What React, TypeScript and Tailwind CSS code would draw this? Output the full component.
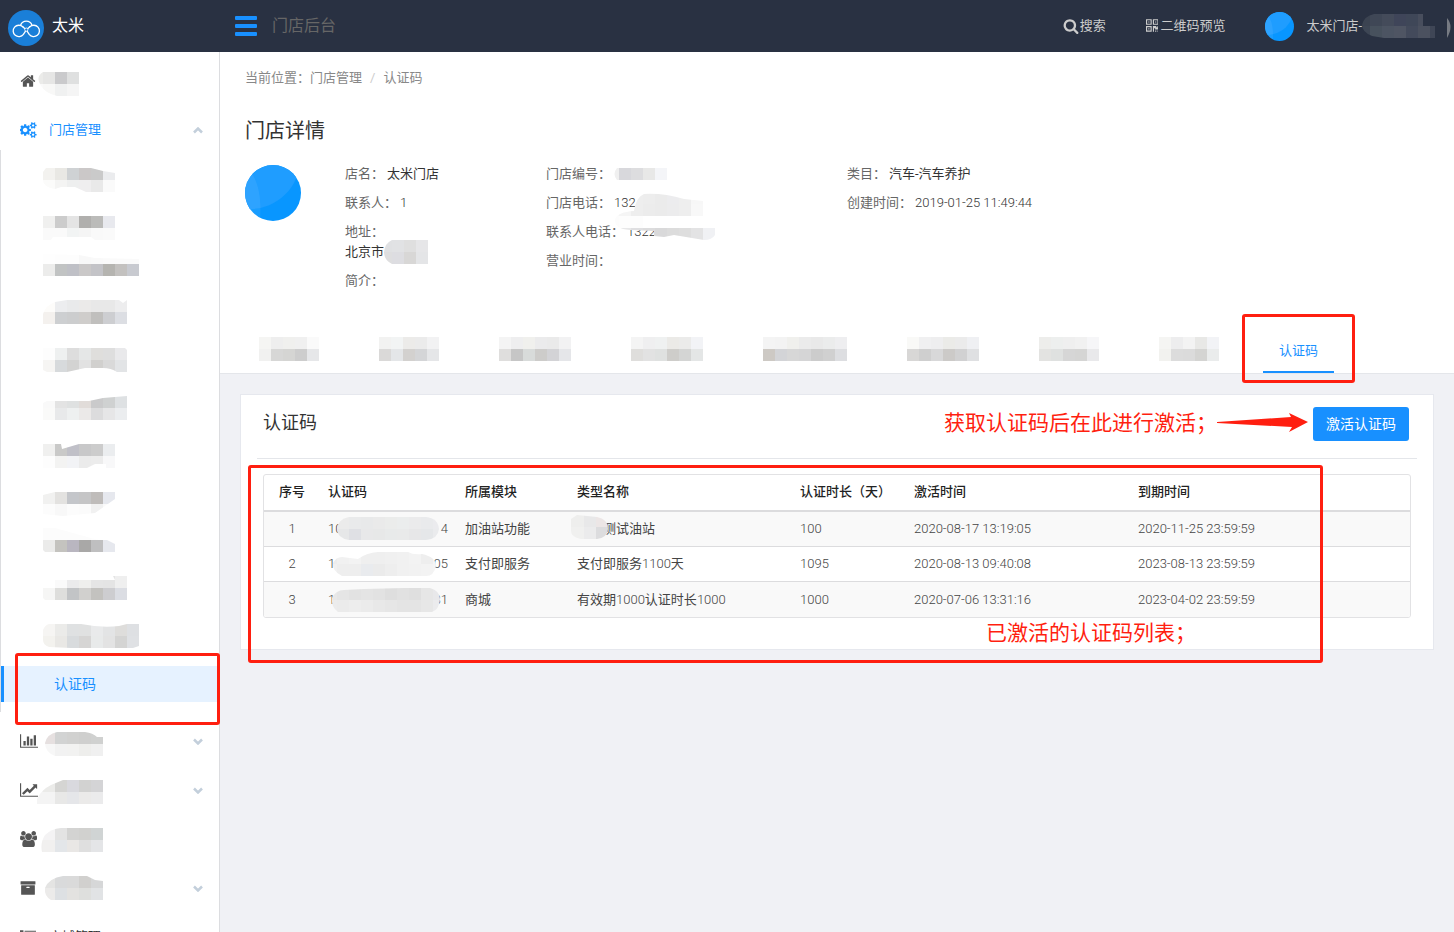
import { useId } from 'react';
import type { ReactNode } from 'react';

const CELL = 12;

type MosaicProps = {
  width: number;
  height: number;
  x?: number;
  y?: number;
  rows: string[];
  clip?: string;
  className?: string;
};

// Pixelated cover for private text. Each row is a list of hex colours, one per cell.
function Mosaic({ width, height, x = 0, y = 0, rows, clip, className }: MosaicProps) {
  const id = useId();
  return (
    <svg
      width={width}
      height={height}
      viewBox={`0 0 ${width} ${height}`}
      shapeRendering="crispEdges"
      aria-hidden="true"
      className={`shrink-0 ${className ?? ''}`}
    >
      {clip && (
        <clipPath id={id}>
          <path d={clip} />
        </clipPath>
      )}
      <g clipPath={clip ? `url(#${id})` : undefined}>
        {rows.map((row, r) =>
          row
            .split(' ')
            .map((color, c) => (
              <rect
                key={`${r}-${c}`}
                x={x + c * CELL}
                y={y + r * CELL}
                width={CELL}
                height={CELL}
                fill={`#${color}`}
              />
            )),
        )}
      </g>
    </svg>
  );
}

const icons = {
  home: {
    w: 1792,
    d: 'M1472 992v480q0 26-19 45t-45 19h-384v-384h-256v384h-384q-26 0-45-19t-19-45v-480q0-1 .5-3t.5-3l575-474 575 474q1 2 1 6zm223-69l-62 74q-8 9-21 11h-3q-13 0-21-7l-692-577-692 577q-12 8-24 7-13-2-21-11l-62-74q-8-10-7-23.5t11-21.5l719-599q32-26 76-26t76 26l244 204v-195q0-14 9-23t23-9h192q14 0 23 9t9 23v408l219 182q10 8 11 21.5t-7 23.5z',
  },
  search: {
    w: 1792,
    d: 'M1216 832q0-185-131.5-316.5t-316.5-131.5-316.5 131.5-131.5 316.5 131.5 316.5 316.5 131.5 316.5-131.5 131.5-316.5zm512 832q0 52-38 90t-90 38q-54 0-90-38l-343-342q-179 124-399 124-143 0-273.5-55.5t-225-150-150-225-55.5-273.5 55.5-273.5 150-225 225-150 273.5-55.5 273.5 55.5 225 150 150 225 55.5 273.5q0 220-124 399l343 343q37 37 37 90z',
  },
  cogs: {
    w: 1920,
    d: 'M832 896q0-106-75-181t-181-75-181 75-75 181 75 181 181 75 181-75 75-181zm768 512q0-52-38-90t-90-38-90 38-38 90q0 53 37.5 90.5t90.5 37.5 90.5-37.5 37.5-90.5zm0-1024q0-52-38-90t-90-38-90 38-38 90q0 53 37.5 90.5t90.5 37.5 90.5-37.5 37.5-90.5zm-384 421v185q0 10-7 19.5t-16 10.5l-155 24q-11 35-32 76 34 48 90 115 7 11 7 20 0 12-7 19-23 30-82.5 89.5t-78.5 59.5q-11 0-21-7l-115-90q-37 19-77 31-11 108-23 155-7 24-30 24h-186q-11 0-20-7.5t-10-17.5l-23-153q-34-10-75-31l-118 89q-7 7-20 7-11 0-21-8-144-133-144-160 0-9 7-19 10-14 41-53t47-61q-23-44-35-82l-152-24q-10-1-17-9.5t-7-19.5v-185q0-10 7-19.5t16-10.5l155-24q11-35 32-76-34-48-90-115-7-11-7-20 0-12 7-20 22-30 82-89t79-59q11 0 21 7l115 90q34-18 77-32 11-108 23-154 7-24 30-24h186q11 0 20 7.5t10 17.5l23 153q34 10 75 31l118-89q8-7 20-7 11 0 21 8 144 133 144 160 0 8-7 19-12 16-42 54t-45 60q23 48 34 82l152 23q10 2 17 10.5t7 19.5zm640 533v140q0 16-149 31-12 27-30 52 51 113 51 138 0 4-4 7-122 71-124 71-8 0-46-47t-52-68q-20 2-30 2t-30-2q-14 21-52 68t-46 47q-2 0-124-71-4-3-4-7 0-25 51-138-18-25-30-52-149-15-149-31v-140q0-16 149-31 13-29 30-52-51-113-51-138 0-4 4-7 4-2 35-20t59-34 30-16q8 0 46 46.5t52 67.5q20-2 30-2t30 2q51-71 92-112l6-2q4 0 124 70 4 3 4 7 0 25-51 138 17 23 30 52 149 15 149 31zm0-1024v140q0 16-149 31-12 27-30 52 51 113 51 138 0 4-4 7-122 71-124 71-8 0-46-47t-52-68q-20 2-30 2t-30-2q-14 21-52 68t-46 47q-2 0-124-71-4-3-4-7 0-25 51-138-18-25-30-52-149-15-149-31v-140q0-16 149-31 13-29 30-52-51-113-51-138 0-4 4-7 4-2 35-20t59-34 30-16q8 0 46 46.5t52 67.5q20-2 30-2t30 2q51-71 92-112l6-2q4 0 124 70 4 3 4 7 0 25-51 138 17 23 30 52 149 15 149 31z',
  },
  barChart: {
    w: 2048,
    d: 'M640 896v512h-256v-512h256zm384-512v1024h-256v-1024h256zm1024 1152v128h-2048v-1536h128v1408h1920zm-640-896v768h-256v-768h256zm384-384v1152h-256v-1152h256z',
  },
  lineChart: {
    w: 2048,
    d: 'M2048 1536v128h-2048v-1536h128v1408h1920zm-128-1248v435q0 21-19.5 29.5t-35.5-7.5l-121-121-633 633q-10 10-23 10t-23-10l-233-233-416 416-192-192 585-585q10-10 23-10t23 10l233 233 464-464-121-121q-16-16-7.5-35.5t29.5-19.5h435q14 0 23 9t9 23z',
  },
  users: {
    w: 1920,
    d: 'M593 896q-162 5-265 128h-134q-82 0-138-40.5t-56-118.5q0-353 124-353 6 0 43.5 21t97.5 42.5 119 21.5q67 0 133-23-5 37-5 66 0 159 81 277zm1071 637q0 120-73 189.5t-194 69.5h-874q-121 0-194-69.5t-73-189.5q0-53 3.5-103.5t14-109 26.5-108.5 43-97.5 62-81 85.5-53.5 111.5-20q10 0 43 21.5t73 48 107 48 135 21.5 135-21.5 107-48 73-48 43-21.5q61 0 111.5 20t85.5 53.5 62 81 43 97.5 26.5 108.5 14 109 3.5 103.5zm-1024-1277q0 106-75 181t-181 75-181-75-75-181 75-181 181-75 181 75 75 181zm704 384q0 159-112.5 271.5t-271.5 112.5-271.5-112.5-112.5-271.5 112.5-271.5 271.5-112.5 271.5 112.5 112.5 271.5zm576 225q0 78-56 118.5t-138 40.5h-134q-103-123-265-128 81-118 81-277 0-29-5-66 66 23 133 23 59 0 119-21.5t97.5-42.5 43.5-21q124 0 124 353zm-128-609q0 106-75 181t-181 75-181-75-75-181 75-181 181-75 181 75 75 181z',
  },
  archive: {
    w: 1792,
    d: 'M1088 832q0-26-19-45t-45-19h-256q-26 0-45 19t-19 45 19 45 45 19h256q26 0 45-19t19-45zm576-192v960q0 26-19 45t-45 19h-1408q-26 0-45-19t-19-45v-960q0-26 19-45t45-19h1408q26 0 45 19t19 45zm64-448v256q0 26-19 45t-45 19h-1536q-26 0-45-19t-19-45v-256q0-26 19-45t45-19h1536q26 0 45 19t19 45z',
  },
  list: {
    w: 1792,
    d: 'M0 128h384v256h-384zM512 192h1280v128h-1280zM0 768h384v256h-384zM512 832h1280v128h-1280zM0 1408h384v256h-384zM512 1472h1280v128h-1280z',
  },
  qrcode: {
    w: 1408,
    d: 'M384 1152v128h-128v-128h128zm0-768v128h-128v-128h128zm768 0v128h-128v-128h128zm-1024 1023h384v-383h-384v383zm0-767h384v-384h-384v384zm768 0h384v-384h-384v384zm-256 256v640h-640v-640h640zm512 512v128h-128v-128h128zm256 0v128h-128v-128h128zm0-512v384h-384v-128h-128v384h-128v-640h384v128h128v-128h128zm-768-768v640h-640v-640h640zm768 0v640h-640v-640h640z',
  },
};

function Icon({ name, size = 16 }: { name: keyof typeof icons; size?: number }) {
  const { w, d } = icons[name];
  return (
    <svg
      height={size}
      width={(size * w) / 1792}
      viewBox={`0 0 ${w} 1792`}
      fill="currentColor"
      aria-hidden="true"
      className="shrink-0"
    >
      <path d={d} />
    </svg>
  );
}

function Chevron({ up = false }: { up?: boolean }) {
  return (
    <svg width="10" height="7" viewBox="0 0 10 7" fill="none" stroke="#c3cfdb" strokeWidth="2.5" aria-hidden="true">
      <path d={up ? 'M1 5.500l4-4 4 4' : 'M1 1.500l4 4 4-4'} />
    </svg>
  );
}

function Avatar({ size }: { size: number }) {
  const id = useId();
  return (
    <svg width={size} height={size} viewBox="0 0 56 56" aria-hidden="true" className="shrink-0">
      <clipPath id={id}>
        <circle cx="28" cy="28" r="28" />
      </clipPath>
      <g clipPath={`url(#${id})`}>
        <rect width="56" height="56" fill="#0896ff" />
        <circle cx="5" cy="-6" r="50" fill="#1f9dff" />
        <path d="M0 0c12 12 17 28 15 56H0z" fill="#fff" fillOpacity=".07" />
      </g>
    </svg>
  );
}

function Logo() {
  return (
    <svg width="36" height="36" viewBox="0 0 36 36" fill="none" aria-hidden="true">
      <circle cx="18" cy="18" r="18" fill="#1a7fd8" />
      <g stroke="#fff" strokeWidth="1.3" strokeLinecap="round">
        <path d="M12.600 15.300A6 6 0 0 1 24 15.300" />
        <path d="M14.800 16.800A5.700 5.700 0 1 0 15.400 24.400L18.300 20L21.800 16.800" />
        <path d="M21.800 16.800A5.700 5.700 0 1 1 21.200 24.400L18.300 20L14.800 16.800" />
      </g>
      <circle cx="18.300" cy="19.600" r="1.600" fill="#1a7fd8" stroke="#fff" strokeWidth=".8" />
    </svg>
  );
}

function Highlight({ className }: { className: string }) {
  return <div className={`pointer-events-none absolute rounded-[3px] border-3 border-[#ff1f10] ${className}`} />;
}

type Cover = { y: number; rows: string[]; clip?: string };

const submenu: Cover[] = [
  {
    y: 8,
    rows: ['f3f2ef e9e8e4 cfd2d4 cbc8c8 cacaca ebecee', 'fbfbfa f4f4f3 eeefef efeeef e9e9e9 fafafa'],
    clip: 'M3 8H48L60 11L72 13V32H43L32 27H18L12 29Q0 27 0 20V12Z',
  },
  {
    y: 10,
    rows: ['f0f0ef cccccc e4e4e4 b0afad bbbbb9 e8e9ee', 'fafafa fafafa f2f4f4 f5f5f5 f9f9f9 fafafa'],
    clip: 'M0 10H72V34H52L48 31H10L8 34H0Z',
  },
  {
    y: 0,
    rows: [
      'fefefe fdfdfd fdfdfd f8f8f8 f9f9f9 fafafa fafafa fafafa',
      'ececeb c1c3c3 bfc0c6 cac8c8 c3c3c7 b5b4b0 c3c1bf c8cad0',
    ],
    clip: 'M0 2L36 3L52 6L96 7V24H0Z',
  },
  {
    y: 2,
    rows: ['fdfcfa ecedef e9eaeb ebeae9 e8e8e8 e8e8e8 ededee', 'f4f1ee cdcfd1 cccdce cfcdcb c0bfbd cdced1 dcdee3'],
    clip: 'M12 4L24 2H76L80 5L84 2V26H0V16Q3 7 12 4Z',
  },
  {
    y: 4,
    rows: ['fdfdfd eef0f0 dddddd e5e7e7 dfdedc dedede e9e9eb', 'f6f5f3 d7dadc d3d3d2 e2e2e2 d1d0ce d9d9d9 e2e4e6'],
    clip: 'M0 4H82L84 6V28H74Q68 24 60 24H42L24 28H4L0 26Z',
  },
  {
    y: 6,
    rows: ['f9f9f9 e3e3e3 dfe1e1 e1dcd9 cacacb cfd1d1 dee1e3', 'fafaf9 e8e9ea eef0f0 ebe9e8 dcdcdd e6e6e7 ebedef'],
    clip: 'M4 11H46L60 8L84 6V30H0V13Z',
  },
  {
    y: 8,
    rows: ['f0f0ef c9c9c8 c0c0c8 c8c8c9 cccccc ebedef', 'fdfdfd f3f3f2 f2f3f6 ebebeb ececec f8f8f9'],
    clip: 'M0 8H18L19 13L36 8H72V32H63V28H52L44 32H0Z',
  },
  {
    y: 10,
    rows: ['f1f1f0 e3e2e0 c4c6ca c5c5c6 bfbcba e6e8ee', 'fcfcfc f8f8f8 fcfcfc fbfbfb f1f1f1 fafafa'],
    clip: 'M12 10H72V17L52 31L20 34L0 32V13Z',
  },
  {
    y: 0,
    rows: ['fcfcfc fcfcfc fcfcfc fcfcfc fdfdfd ffffff', 'ebebea c4c3bf b9b6c0 a9a8a7 bfbfc0 e6e8ee'],
    clip: 'M0 0H12L48 10L56 12H64L72 16V24H2L0 22Z',
  },
  {
    y: 2,
    rows: ['ffffff fafafa ebebec efefed e5e5e5 e4e4e4 efefef', 'f6f6f5 dededc c2c4c6 d1d0ce c3c2bf cdcdd0 dbdde3'],
    clip: 'M12 6H72L70 2H84V26H2L0 24V14H12Z',
  },
  {
    y: 4,
    rows: [
      'f6f5f3 ebebe9 dfe1e2 e0e1e1 e9eaeb e3e4e5 dedddb dee0e3',
      'f3f2ee e9e8e5 d8dbdd d6d5d4 e8eaea e3e3e3 d4d4d3 dfe1e4',
    ],
    clip: 'M6 4H38Q58 8 76 6L84 4H96V26L90 28H28L6 27Q0 25 0 20V10Q2 5 6 4Z',
  },
];

function SideRow({ icon, cover, arrow }: { icon: keyof typeof icons; cover: Cover; arrow?: boolean }) {
  return (
    <li>
      <a href="#" className="flex h-10 items-center pr-4 pl-5 text-[#555]">
        <span className="flex w-[17px]">
          <Icon name={icon} />
        </span>
        <Mosaic width={66} height={40} x={-6} {...cover} />
        {arrow && (
          <span className="ml-auto">
            <Chevron />
          </span>
        )}
      </a>
    </li>
  );
}

function Sidebar() {
  return (
    <aside className="relative z-10 w-[220px] shrink-0 border-r border-[#dcdde0] bg-white">
      <ul className="flex flex-col gap-[9px] pt-[9px]">
        <SideRow
          icon="home"
          cover={{
            y: 11,
            rows: ['ebebe9 e6e6e5 cacacc dfe0e0', 'fafafa f8f8f7 f0f1f1 f5f5f5'],
            clip: 'M6 11H42V35H20Q8 32 4 25Q-2 16 6 11Z',
          }}
        />
        <li>
          <a href="#" className="flex h-10 items-center pr-4 pl-5 text-[#1890ff]">
            <span className="flex w-[17px]">
              <Icon name="cogs" />
            </span>
            <span className="ml-3">门店管理</span>
            <span className="ml-auto">
              <Chevron up />
            </span>
          </a>
          <ul className="flex flex-col gap-2.5 border-l border-[#dcdde0] py-2.5">
            {submenu.map((cover, i) => (
              <li key={i}>
                <a href="#" className="flex h-9 items-center pl-[42px]">
                  <Mosaic width={96} height={36} {...cover} />
                </a>
              </li>
            ))}
            <li className="relative">
              <a
                href="#"
                aria-current="page"
                className="flex h-9 items-center border-l-3 border-[#1890ff] bg-[#e6f2ff] pl-[50px] text-sm text-[#1890ff]"
              >
                认证码
              </a>
              <Highlight className="-top-[13px] -right-px left-3.5 h-[72px]" />
            </li>
          </ul>
        </li>
        <SideRow
          icon="barChart"
          arrow
          cover={{
            y: 11,
            rows: ['e6e0e0 e6e0e0 d2d3d3 d1d1d0 cfcfce d0d1d0', 'f7f6f6 f7f7f7 f2f2f2 f2f2f1 eeeeec f0f0f0'],
            clip: 'M20 11H48Q56 12 60 16H66V35H18Q8 31 8 22Q10 13 20 11Z',
          }}
        />
        <SideRow
          icon="lineChart"
          arrow
          cover={{
            y: 10,
            rows: ['f0f0f0 ebebe9 d5d5d3 d9d9de d2d2d1 d4d4d6', 'f4f4f4 f4f4f4 e8e8e7 e5e6e9 ebeae9 ebebec'],
            clip: 'M26 10H66V34H0V29Q4 20 14 15Z',
          }}
        />
        <SideRow
          icon="users"
          cover={{
            y: 9,
            rows: ['f5f5f5 f4f3f4 e3e3e3 d3d3d2 d1d1cf d0d4d4', 'f0efee f1f0ef e3e6e9 e9e7e5 dfdfdf e4e5e7'],
            clip: 'M24 9H66V33H5Q3 24 8 16Q14 10 24 9Z',
          }}
        />
        <SideRow
          icon="archive"
          arrow
          cover={{
            y: 8,
            rows: ['e6e6e5 e4e4e3 d9dadb dadada d1d0ce d6d7d8', 'eeeeec ecebea dde0e3 e3e2e0 dedfdd e1e3e5'],
            clip: 'M26 8H50L58 12L66 13V32H14Q7 28 8 20Q12 10 26 8Z',
          }}
        />
        <li>
          <a href="#" className="flex h-10 items-center pl-5 text-[#555]">
            <span className="flex w-[17px]">
              <Icon name="list" />
            </span>
            <span className="ml-3 text-[#333]">商城管理</span>
          </a>
        </li>
      </ul>
    </aside>
  );
}

function Header() {
  return (
    <header className="flex h-13 shrink-0 items-center bg-[#293142] text-[#ccc]">
      <div className="flex w-[235px] shrink-0 items-center gap-2 pt-1 pl-2">
        <Logo />
        <span className="pb-1 text-base text-white">太米</span>
      </div>
      <button type="button" aria-label="菜单" className="flex w-[22px] cursor-pointer flex-col gap-1">
        <span className="h-1 rounded-[1px] bg-[#1890ff]" />
        <span className="h-1 rounded-[1px] bg-[#1890ff]" />
        <span className="h-1 rounded-[1px] bg-[#1890ff]" />
      </button>
      <span className="ml-[15px] text-base text-[#666]">门店后台</span>
      <div className="ml-auto flex items-center">
        <a href="#" className="flex items-center gap-px">
          <Icon name="search" />
          搜索
        </a>
        <a href="#" className="ml-10 flex items-center gap-0.5">
          <Icon name="qrcode" />
          二维码预览
        </a>
        <a href="#" className="ml-10 flex items-center">
          <Avatar size={29} />
          <span className="ml-3">太米门店-</span>
          <Mosaic
            width={92}
            height={24}
            x={-4}
            rows={[
              '3b4351 3f4756 444b5a 3f4559 3f4758 484e5d 293142 777b83',
              '3d4654 47515d 4c5462 4f5563 434a5b 4b515f 3f4656 777b83',
            ]}
            clip="M12 0H61V12H73V24H22L10 22Q0 18 0 11Q2 2 12 0ZM85 4Q92 12 85 24Z"
          />
        </a>
      </div>
    </header>
  );
}

function Field({ label, children }: { label: string; children?: ReactNode }) {
  return (
    <div className="flex flex-wrap gap-x-[3px] leading-5">
      <dt className="text-[#666]">{label}：</dt>
      {children && <dd className="flex items-center text-[#333]">{children}</dd>}
    </div>
  );
}

function StoreInfo() {
  return (
    <div className="flex pt-[19px]">
      <div className="w-25 shrink-0 pt-px">
        <Avatar size={56} />
      </div>
      <dl className="flex w-[201px] shrink-0 flex-col gap-[9px]">
        <Field label="店名">太米门店</Field>
        <Field label="联系人">
          <span className="font-light">1</span>
        </Field>
        <div className="leading-5">
          <dt className="text-[#666]">地址：</dt>
          <dd className="flex h-5 items-center text-[#333]">
            北京市
            <Mosaic
              width={44}
              height={24}
              x={-4}
              rows={['e0e1e3 e1e2e4 dfdfdf e6e6e8', 'dededf dddde1 d8d7d6 e4e5e7']}
              clip="M8 0H44V24H8Q0 20 0 12Q1 3 8 0Z"
            />
          </dd>
        </div>
        <Field label="简介" />
      </dl>
      <dl className="relative flex w-[301px] shrink-0 flex-col gap-[9px]">
        <Field label="门店编号">
          <Mosaic
            width={53}
            height={12}
            x={-7}
            rows={['f0f0f0 d8d8dc dddddf e8e8e7 f4f5f8']}
            clip="M3 0H53V12H3Q-2 6 3 0Z"
          />
        </Field>
        <Field label="门店电话">
          <span className="font-light">132</span>
        </Field>
        <Field label="联系人电话">
          <span className="font-light">13222</span>
        </Field>
        <Field label="营业时间" />
        <Mosaic
          width={101}
          height={48}
          x={-7}
          y={-1}
          rows={[
            'ffffff ffffff eeeeee ededed ebebeb ececee eeeeee f7f7f7 ffffff',
            'fafafa f5f5f5 eeeeee ececec ebebeb ececed eeeeee f8f8f8 ffffff',
            'fcfcfc fdfdfd fdfdfd ffffff ffffff ffffff ffffff ffffff ffffff',
            'ffffff e7e7e8 dfdfe1 dcdcdd d9d9da dcdcdc dedede e3e3e4 f0f1f4',
          ]}
          clip="M30 1Q50 0 70 6L89 8V23H80V35H101V42Q98 47 90 47L60 42L50 44L40 43V38L16 37Q0 36 1 26Q4 19 20 18Q22 4 30 1Z"
          className="absolute top-[29px] left-[68px]"
        />
      </dl>
      <dl className="flex flex-col gap-[9px]">
        <Field label="类目">汽车-汽车养护</Field>
        <Field label="创建时间">
          <span className="font-light">2019-01-25 11:49:44</span>
        </Field>
      </dl>
    </div>
  );
}

const tabs = [
  ['f5f5f3 eeeeee f0f0ee f0f0f0 fafafa', 'f1f1f0 d7d7d6 d5d5d3 cdcdcd e6e7e9'],
  ['f2f2f1 f2f4f4 ecebe9 ebebeb f2f2f3', 'dad9d8 e4e6e8 d3d1cf d4d5d7 e5e6e8'],
  ['f4f4f4 eeeeef f0f0ed ebebec eaeaea f2f2f3', 'dfdedd c6c6c6 d8dbda cdccca d3d3d6 e5e6e9'],
  ['f4f4f4 efeff0 eff1f1 ebeae7 ebebea f2f3f6', 'dfdedc e2e2e2 dfe1e0 cecdca d4d5d4 e4e6e6'],
  ['f4f4f4 f3f3f3 f0f0ed ebebeb e9e9e9 ebecec eeeef0', 'cdc9c4 d3d4d7 d7d7d7 d5d5d6 cccccc d0d0d0 dddee1'],
  ['f9f9f7 f0f0f1 eeeeef ebebe8 ebebeb eff0f3', 'd8d7d6 cfcfcf d8d8d9 cccac8 d1d1d2 dfe0e2'],
  ['ededeb edefee efefef f1f1f1 f6f6f8', 'e3e3e1 dfe1e0 d6d6d6 d5d5d4 e9e9eb'],
  ['f5f5f3 ededee f3f3f3 e8e8e6 f2f3f6', 'f2f2ef dcdcdc dbdbdb d4d4d2 eaecec'],
];

function Tabs() {
  return (
    <nav className="-ml-0.5 flex gap-7 pt-[39px]">
      {tabs.map((rows, i) => (
        <button key={i} type="button" className="h-[43px] cursor-pointer px-4 pb-1.5">
          <Mosaic width={rows[0].split(' ').length * CELL} height={24} rows={rows} />
        </button>
      ))}
      <div className="relative">
        <button
          type="button"
          className="h-[43px] cursor-pointer border-b-2 border-[#1890ff] px-4 text-[#1890ff]"
        >
          认证码
        </button>
        <Highlight className="-top-4 -right-[21px] -bottom-2.5 -left-[21px]" />
      </div>
    </nav>
  );
}

const records = [
  {
    code: ['10', '4'],
    module: '加油站功能',
    type: '测试油站',
    days: '100',
    start: '2020-08-17 13:19:05',
    end: '2020-11-25 23:59:59',
    cover: {
      y: 5,
      rows: [
        'ebebeb ebebeb e9eaeb e8e9ea eaeaea ebeceb ebeded ebebec e9eaec ebebee',
        'e8e8e8 e6e7e8 dfe0e4 e8e8e9 e7e8e8 e8eaea e9eaea e7e7e8 e5e7e9 eaebed',
      ],
      clip: 'M21 5H98Q110 6 111 17Q110 27 98 28H21Q9 26 9 17Q10 7 21 5Z',
    },
  },
  {
    code: ['10', '05'],
    module: '支付即服务',
    type: '支付即服务1100天',
    days: '1095',
    start: '2020-08-13 09:40:08',
    end: '2023-08-13 23:59:59',
    cover: {
      y: 5,
      rows: [
        'ededed f1f1f1 f3f3f3 efefef efefef f0f0f0 f1f1f1 f3f3f3 eeeeee f4f4f4',
        'f1f1f1 eeeeee eeeeee e9ebee ebebeb eeeeee f1f1f1 f2f2f2 f3f3f3 f4f4f4',
      ],
      clip: 'M14 10L30 12Q38 6 50 5H80Q85 8 94 7Q108 10 108 19Q106 29 98 29H14Q4 24 5 16Q8 10 14 10Z',
    },
  },
  {
    code: ['10', '81'],
    module: '商城',
    type: '有效期1000认证时长1000',
    days: '1000',
    start: '2020-07-06 13:31:16',
    end: '2023-04-02 23:59:59',
    cover: {
      y: 6,
      rows: [
        'e8e8e8 e5e5e5 e2e2e2 e4e4e4 e2e2e2 dedede e1e1e1 dfdfdf e6e6e6 e8e8ea',
        'ececec ebebeb ededed ebebeb e8e8e8 e6e6e6 e4e4e4 e4e4e4 e7e7e7 ebebed',
      ],
      clip: 'M16 8L36 7L76 6H102Q112 9 112 17Q111 28 104 30H10Q3 25 4 16Q8 8 16 8Z',
    },
  },
];

const columns = ['序号', '认证码', '所属模块', '类型名称', '认证时长（天）', '激活时间', '到期时间'];
const widths = ['w-14', 'w-[137px]', 'w-28', 'w-[223px]', 'w-[114px]', 'w-56', ''];

// Chinese stays at normal weight, digits are light
function LightDigits({ text }: { text: string }) {
  return text.split(/(\d+)/).map((part, i) =>
    i % 2 ? (
      <span key={i} className="font-light">
        {part}
      </span>
    ) : (
      part
    ),
  );
}

function CodeTable() {
  return (
    <div className="mx-[22px] mt-[15px] overflow-hidden rounded-[3px] border border-[#e2e2e4]">
      <table className="w-full table-fixed text-left">
        <thead>
          <tr className="h-9 border-b-2 border-[#dcdcde]">
            {columns.map((column, i) => (
              <th
                key={column}
                scope="col"
                className={`px-2 pb-0.5 font-medium whitespace-nowrap text-[#222] first:text-center ${widths[i]}`}
              >
                {column}
              </th>
            ))}
          </tr>
        </thead>
        <tbody>
          {records.map((record, i) => (
            <tr
              key={record.start}
              className="h-[35px] border-b border-[#dcdcde] font-light text-[#444] last:border-b-0 odd:bg-[#f9f9f9]"
            >
              <td className="text-center">{i + 1}</td>
              <td className="px-2">
                <div className="relative flex h-[34px] w-[120px] items-center justify-between">
                  <span>{record.code[0]}</span>
                  <span>{record.code[1]}</span>
                  <Mosaic width={120} height={34} x={-3} {...record.cover} className="absolute inset-0" />
                </div>
              </td>
              <td className="px-2 font-normal">{record.module}</td>
              <td className="px-2 font-normal">
                {i === 0 ? (
                  <div className="relative pl-[26px]">
                    {record.type}
                    <Mosaic
                      width={37}
                      height={24}
                      x={-11}
                      rows={['eeeeed eeeeed e8e8e9 ece6e6', 'f0f0ef f0f0ef ebebec dcdcde']}
                      clip="M6 0L26 2Q37 4 37 14Q36 23 26 24H10Q0 22 0 16V4Z"
                      className="absolute -top-1 -left-1.5"
                    />
                  </div>
                ) : (
                  <LightDigits text={record.type} />
                )}
              </td>
              <td className="px-2">{record.days}</td>
              <td className="px-2">{record.start}</td>
              <td className="px-2">{record.end}</td>
            </tr>
          ))}
        </tbody>
      </table>
    </div>
  );
}

function CodeCard() {
  return (
    <section className="relative mx-5 mt-5 border border-[#e6e8ee] bg-white pb-[31px]">
      <div className="mx-4 flex h-16 items-start border-b border-[#e4e6ea] pt-3 pr-2 pl-1.5">
        <h2 className="text-lg leading-8 text-[#333]">认证码</h2>
        <p className="ml-auto text-[21px] leading-8 text-[#ff1f10]">获取认证码后在此进行激活；</p>
        <svg width="92" height="34" viewBox="0 0 92 34" fill="#ff1f10" aria-hidden="true" className="mr-1">
          <path d="M0 15L74 10L72 6L91 15L72 25L75 20L0 16Z" />
        </svg>
        <button
          type="button"
          className="h-[34px] cursor-pointer rounded-[3px] bg-[#1890ff] px-[13px] text-sm text-white"
        >
          激活认证码
        </button>
      </div>
      <CodeTable />
      <Highlight className="top-[70px] right-[110px] -bottom-3.5 left-[7px]" />
      <p className="absolute right-[237px] bottom-0 text-[21px] leading-8 text-[#ff1f10]">已激活的认证码列表；</p>
    </section>
  );
}

export default function App() {
  return (
    <div className="flex h-screen flex-col overflow-hidden font-[Roboto,'Noto_Sans_CJK_SC',sans-serif] text-[13px]">
      <Header />
      <div className="flex min-h-0 flex-1">
        <Sidebar />
        <main className="min-w-0 flex-1 bg-[#f0f1f5]">
          <div className="border-b border-[#e4e6ea] bg-white px-[25px]">
            <nav className="flex gap-2 pt-4 leading-5 text-[#888]">
              <span>当前位置：门店管理</span>
              <span className="text-[#ccc]">/</span>
              <span>认证码</span>
            </nav>
            <h1 className="pt-[29px] text-xl leading-7 text-[#333]">门店详情</h1>
            <StoreInfo />
            <Tabs />
          </div>
          <CodeCard />
        </main>
      </div>
    </div>
  );
}
